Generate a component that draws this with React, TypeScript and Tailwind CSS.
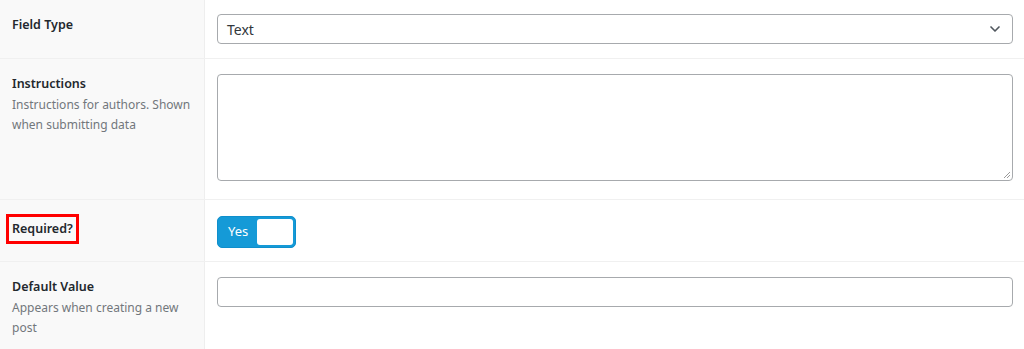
import { ChevronDown } from "lucide-react";

const font = { fontFamily: '"Segoe UI", "Noto Sans", "Open Sans", sans-serif' };

function Row({
  label,
  description,
  boxed,
  children,
  last,
}: {
  label: string;
  description?: string[];
  boxed?: boolean;
  children: React.ReactNode;
  last?: boolean;
}) {
  return (
    <div className={`flex ${last ? "" : "border-b border-[#f0f0f0]"}`}>
      <div className="w-[205px] shrink-0 border-r border-[#eeeeee] bg-[#f9f9f9] px-3 pt-[15px] pb-4">
        <div
          className={
            boxed
              ? "-mx-[6px] -mt-[7px] -mb-[5px] inline-block border-[3px] border-[#ff0000] px-[3px] py-[2px]"
              : ""
          }
        >
          <div className="text-[12.5px] font-semibold leading-[20px] whitespace-nowrap text-[#23282d]">
            {label}
          </div>
        </div>
        {description && (
          <div className="mt-[1px] text-[12px] leading-[20px] whitespace-nowrap text-[#72777c]">
            {description.map((line) => (
              <div key={line}>{line}</div>
            ))}
          </div>
        )}
      </div>
      <div className="flex-1 pr-[11px] pl-3">{children}</div>
    </div>
  );
}

export default function App() {
  return (
    <div className="h-[349px] w-[1024px] overflow-hidden bg-white" style={font}>
      <Row label="Field Type">
        <div className="mt-[14px] mb-[14px] flex h-[30px] items-center justify-between rounded-[4px] border border-[#a7aaad] pr-[9px] pl-[9px] text-[14px] text-[#32373c]">
          <span>Text</span>
          <ChevronDown size={16} strokeWidth={2.5} className="text-[#50575e]" />
        </div>
      </Row>
      <Row label="Instructions" description={["Instructions for authors. Shown", "when submitting data"]}>
        <div className="relative mt-[15px] mb-[18px] h-[107px] rounded-[4px] border border-[#a7aaad]">
          <svg className="absolute right-[1px] bottom-[1px]" width="9" height="9" viewBox="0 0 9 9">
            <path d="M8 2 L2 8 M8 5 L5 8" stroke="#9a9a9a" strokeWidth="1" />
          </svg>
        </div>
      </Row>
      <Row label="Required?" boxed>
        <div className="mt-4 mb-[13px] flex h-[32px] w-[79px] items-center rounded-[5px] border border-[#0f8fcc] bg-[#159ad7] p-[2px]">
          <span className="flex-1 pl-[8px] text-[13px] text-white">Yes</span>
          <span className="h-full w-[36px] rounded-[3px] bg-white" />
        </div>
      </Row>
      <Row label="Default Value" description={["Appears when creating a new", "post"]} last>
        <div className="mt-[15px] h-[30px] rounded-[4px] border border-[#a7aaad]" />
      </Row>
    </div>
  );
}
